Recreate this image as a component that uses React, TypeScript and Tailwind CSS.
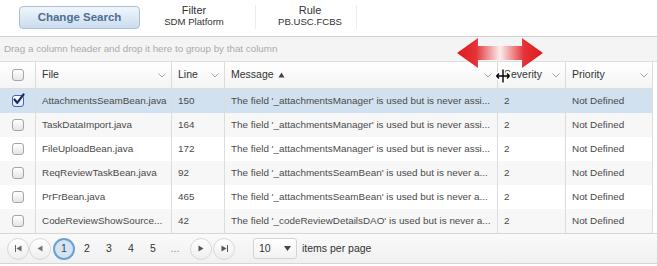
import { ReactNode } from "react";

const font = { fontFamily: '"Liberation Sans", Arial, sans-serif' };

interface IRow {
    file: string;
    line: string;
    message: string;
    selected?: boolean;
}

const rows: IRow[] = [
    { file: "AttachmentsSeamBean.java", line: "150", message: "The field '_attachmentsManager' is used but is never assi...", selected: true },
    { file: "TaskDataImport.java", line: "164", message: "The field '_attachmentsManager' is used but is never assi..." },
    { file: "FileUploadBean.java", line: "172", message: "The field '_attachmentsManager' is used but is never assi..." },
    { file: "ReqReviewTaskBean.java", line: "92", message: "The field '_attachmentsSeamBean' is used but is never a..." },
    { file: "PrFrBean.java", line: "465", message: "The field '_attachmentsSeamBean' is used but is never a..." },
    { file: "CodeReviewShowSource...", line: "42", message: "The field '_codeReviewDetailsDAO' is used but is never a..." },
];

const cols = "grid grid-cols-[36px_136px_53px_273px_68px_87px]";

const Chevron = () => (
    <svg width="8" height="5" viewBox="0 0 8 5" className="shrink-0">
        <path d="M0.5 0.5 L4 4 L7.5 0.5" fill="none" stroke="#9a9a9a" strokeWidth="0.9" />
    </svg>
);

const Checkbox = ({ checked }: { checked?: boolean }) => (
    <div className={checked
        ? "w-[12px] h-[12px] rounded-[3px] border border-[#4b64a8] bg-gradient-to-b from-white to-[#dfe6f3] relative"
        : "w-[12px] h-[12px] rounded-[3px] border border-[#a5a5a5] bg-gradient-to-b from-white to-[#e6e6e6]"}>
        {checked && (
            <svg width="13" height="13" viewBox="0 0 13 13" className="absolute left-[-1px] top-[-3px]">
                <path d="M2.5 6.5 L5.2 9.8 L11.5 1.5" fill="none" stroke="#1b2a6b" strokeWidth="2.2" strokeLinecap="round" strokeLinejoin="round" />
            </svg>
        )}
    </div>
);

const HeadCell = ({ children, chevron = true, last }: { children: ReactNode; chevron?: boolean; last?: boolean }) => (
    <div className={`flex items-center justify-between pl-[6px] pr-[5px] ${last ? "" : "border-r border-[#dcdcdc]"}`}>
        <span className="flex items-center gap-[4px]">{children}</span>
        {chevron && <Chevron />}
    </div>
);

const Cell = ({ children, last }: { children: ReactNode; last?: boolean }) => (
    <div className={`flex items-center pl-[6px] whitespace-nowrap overflow-hidden ${last ? "" : "border-r border-[#dcdcdc]"}`}>
        {children}
    </div>
);

const PagerBtn = ({ children }: { children: ReactNode }) => (
    <div className="w-[22px] h-[22px] rounded-full border border-[#d8d8d8] bg-gradient-to-b from-white to-[#eeeeee] flex items-center justify-center">
        {children}
    </div>
);

const RedArrow = () => (
    <svg width="90" height="32" viewBox="0 0 90 32" className="absolute left-[455px] top-[37px] pointer-events-none">
        <defs>
            <linearGradient id="ra" x1="0" y1="0" x2="1" y2="0">
                <stop offset="0" stopColor="#e01b1f" />
                <stop offset="0.22" stopColor="#e43236" />
                <stop offset="0.5" stopColor="#fbeeee" />
                <stop offset="0.78" stopColor="#e43236" />
                <stop offset="1" stopColor="#e01b1f" />
            </linearGradient>
        </defs>
        <path d="M2 16 L23 1 L23 9 L67 9 L67 1 L88 16 L67 31 L67 23 L23 23 L23 31 Z" fill="url(#ra)" />
    </svg>
);

const ResizeCursor = () => (
    <svg width="16" height="16" viewBox="0 0 16 16" className="absolute left-[495px] top-[68px] pointer-events-none">
        <path d="M8 1 V15 M1 8 H15 M1 8 L4 5 M1 8 L4 11 M15 8 L12 5 M15 8 L12 11" stroke="white" strokeWidth="3.2" fill="none" strokeLinecap="round" />
        <path d="M8 1.5 V14.5 M1.5 8 H14.5 M1.5 8 L4 5.5 M1.5 8 L4 10.5 M14.5 8 L12 5.5 M14.5 8 L12 10.5" stroke="black" strokeWidth="1.4" fill="none" />
    </svg>
);

export default function App() {
    return (
        <div className="w-[657px] h-[266px] bg-white relative overflow-hidden text-[#4a4a4a]" style={font}>
            {/* search summary */}
            <div className="h-[36px] flex items-start pt-[6px]">
                <button className="ml-[19px] w-[121px] h-[23px] rounded-[4px] border border-[#a9c0d8] bg-gradient-to-b from-[#f1f6fb] to-[#cadcee] text-[#4d6f93] text-[11.5px] font-bold">
                    Change Search
                </button>
                <div className="w-[90px] ml-[9px] flex flex-col items-center leading-[12px] text-[#333]">
                    <span className="text-[11px] mt-[-2px]">Filter</span>
                    <span className="text-[9.6px]">SDM Platform</span>
                </div>
                <div className="w-px h-[24px] bg-[#ececec] ml-[16px] mt-[-1px]" />
                <div className="w-[90px] ml-[9px] flex flex-col items-center leading-[12px] text-[#333]">
                    <span className="text-[11px] mt-[-2px]">Rule</span>
                    <span className="text-[9.6px]">PB.USC.FCBS</span>
                </div>
                <div className="w-px h-[24px] bg-[#ececec] ml-[1px] mt-[-1px]" />
            </div>

            {/* grid */}
            <div className="border-t border-[#d2d2d2]">
                <div className="h-[25px] bg-[#f4f4f4] border-b border-[#dedede] flex items-center pl-[4px] text-[9.8px] text-[#ababab]">
                    Drag a column header and drop it here to group by that column
                </div>
                <div className={`${cols} h-[27px] bg-gradient-to-b from-white to-[#f4f4f4] border-b border-[#dcdcdc] border-r w-[653px] text-[10.5px] text-[#333]`}>
                    <div className="flex items-center justify-center border-r border-[#dcdcdc]"><Checkbox /></div>
                    <HeadCell>File</HeadCell>
                    <HeadCell>Line</HeadCell>
                    <HeadCell>
                        Message
                        <svg width="7" height="6" viewBox="0 0 7 6"><path d="M3.5 0.5 L6.5 5.5 L0.5 5.5 Z" fill="#444" /></svg>
                    </HeadCell>
                    <HeadCell>Severity</HeadCell>
                    <HeadCell last>Priority</HeadCell>
                </div>
                {rows.map((r, i) => (
                    <div
                        key={r.file}
                        className={`${cols} h-[24px] w-[653px] border-r border-[#dcdcdc] text-[9.9px] ${r.selected ? "bg-[#d2e1ef]" : i % 2 === 1 ? "bg-[#f7f7f7]" : "bg-white"}`}
                    >
                        <div className="flex items-center justify-center border-r border-[#dcdcdc]"><Checkbox checked={r.selected} /></div>
                        <Cell>{r.file}</Cell>
                        <Cell>{r.line}</Cell>
                        <Cell>{r.message}</Cell>
                        <Cell>2</Cell>
                        <Cell last>Not Defined</Cell>
                    </div>
                ))}

                {/* pager */}
                <div className="h-[31px] border-t border-b border-[#d6d6d6] bg-gradient-to-b from-[#fafafa] to-[#f0f0f0] flex items-center pl-[7px] text-[10.5px] text-[#333]">
                    <PagerBtn>
                        <svg width="7" height="7" viewBox="0 0 7 7"><path d="M0.5 0 V7" stroke="#666" /><path d="M6.5 0.5 L1.5 3.5 L6.5 6.5 Z" fill="#666" /></svg>
                    </PagerBtn>
                    <PagerBtn>
                        <svg width="6" height="7" viewBox="0 0 6 7"><path d="M5.5 0.5 L0.5 3.5 L5.5 6.5 Z" fill="#777" /></svg>
                    </PagerBtn>
                    <div className="ml-[2px] w-[22px] h-[22px] rounded-full border-2 border-[#6aa0d2] bg-[#d5e3f0] flex items-center justify-center text-[#2e4a68]">1</div>
                    <div className="w-[22px] text-center ml-[1px]">2</div>
                    <div className="w-[22px] text-center">3</div>
                    <div className="w-[22px] text-center">4</div>
                    <div className="w-[22px] text-center">5</div>
                    <div className="w-[22px] text-center text-[#888]">...</div>
                    <div className="ml-[4px] flex">
                        <PagerBtn>
                            <svg width="6" height="7" viewBox="0 0 6 7"><path d="M0.5 0.5 L5.5 3.5 L0.5 6.5 Z" fill="#555" /></svg>
                        </PagerBtn>
                        <div className="ml-[1px]">
                            <PagerBtn>
                                <svg width="7" height="7" viewBox="0 0 7 7"><path d="M0.5 0.5 L5.5 3.5 L0.5 6.5 Z" fill="#555" /><path d="M6.5 0 V7" stroke="#555" /></svg>
                            </PagerBtn>
                        </div>
                    </div>
                    <div className="ml-[18px] w-[44px] h-[21px] rounded-[3px] border border-[#d4d4d4] bg-gradient-to-b from-white to-[#f2f2f2] flex items-center justify-between px-[5px]">
                        <span>10</span>
                        <svg width="7" height="5" viewBox="0 0 7 5"><path d="M0 0 H7 L3.5 5 Z" fill="#444" /></svg>
                    </div>
                    <span className="ml-[5px]">items per page</span>
                </div>
            </div>

            <RedArrow />
            <ResizeCursor />
        </div>
    );
}
